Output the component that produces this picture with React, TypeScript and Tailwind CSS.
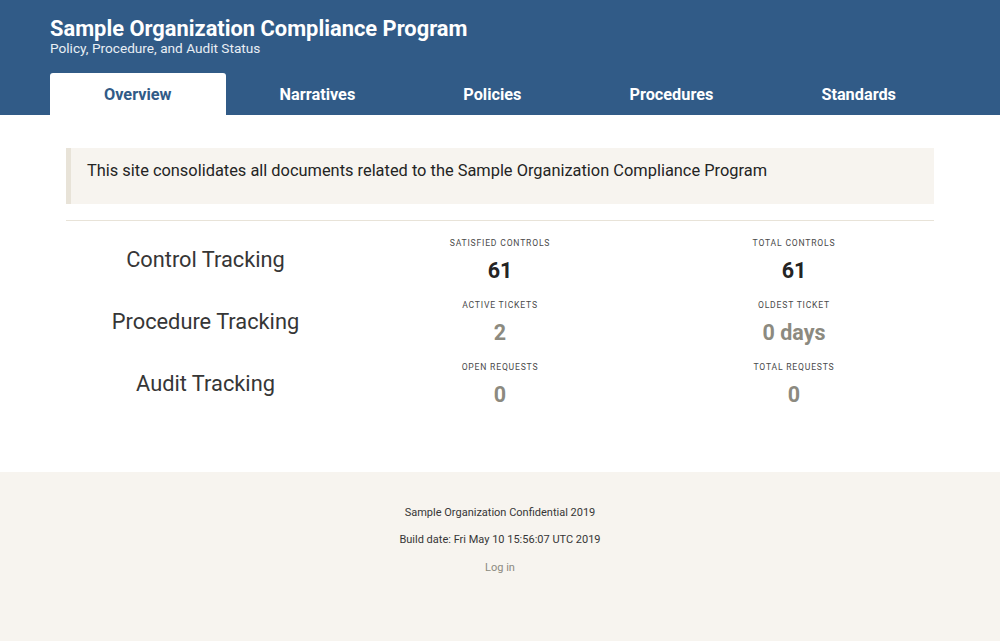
export default function App() {
  const tabs = ["Narratives", "Policies", "Procedures", "Standards"];
  const rows = [
    { t: "Control Tracking", a: "SATISFIED CONTROLS", av: "61", ac: "text-[#242424]", b: "TOTAL CONTROLS", bv: "61", bc: "text-[#242424]" },
    { t: "Procedure Tracking", a: "ACTIVE TICKETS", av: "2", ac: "text-[#8c8a80]", b: "OLDEST TICKET", bv: "0 days", bc: "text-[#8c8a80]" },
    { t: "Audit Tracking", a: "OPEN REQUESTS", av: "0", ac: "text-[#8c8a80]", b: "TOTAL REQUESTS", bv: "0", bc: "text-[#8c8a80]" },
  ];
  return (
    <div className="w-[1000px] h-[641px] flex flex-col bg-white overflow-hidden font-['Roboto',sans-serif] text-[#363636]">
      <header className="bg-[#315b87] h-[115px] flex flex-col justify-between pl-[50px] pt-[15px]">
        <div>
          <h1 className="text-[21.86px] leading-[28px] font-bold text-white">Sample Organization Compliance Program</h1>
          <p className="text-[13.65px] leading-[10px] text-[#e8eef4]">Policy, Procedure, and Audit Status</p>
        </div>
        <nav className="flex items-end h-[42px]">
          <div className="h-[42px] px-[54px] pt-[3px] bg-white rounded-t-[3px] flex items-center justify-center text-[16.3px] font-bold text-[#315b87]">Overview</div>
          {tabs.map((t) => (
            <div key={t} className="h-[42px] px-[54px] pt-[3px] flex items-center justify-center text-[16.3px] font-bold text-white">{t}</div>
          ))}
        </nav>
      </header>
      <main className="flex-1 px-[66px] pt-[33px]">
        <div className="h-[56px] bg-[#f7f4ef] border-l-[5px] border-[#e8e3d8] pl-[16px] pt-[13px] text-[16.4px] leading-[20px] text-[#242424]">
          This site consolidates all documents related to the Sample Organization Compliance Program
        </div>
        <hr className="mt-[16px] border-t border-[#e8e3d8]" />
        <div className="mt-[16px] -mr-[7px] flex flex-col">
          {rows.map((r) => (
            <div key={r.t} className="grid grid-cols-[287px_294px_294px] h-[62px]">
              <div className="pr-[8px] pt-[2px] h-[44px] flex items-center justify-center text-[21.8px] leading-[28px] text-[#363636]">{r.t}</div>
              <div className="flex flex-col items-center">
                <div className="text-[8.6px] leading-[13px] tracking-[0.8px] text-[#4a4a4a]">{r.a}</div>
                <div className={`text-[21.5px] leading-[34px] mt-[4px] font-bold ${r.ac}`}>{r.av}</div>
              </div>
              <div className="flex flex-col items-center">
                <div className="text-[8.6px] leading-[13px] tracking-[0.8px] text-[#4a4a4a]">{r.b}</div>
                <div className={`text-[21.5px] leading-[34px] mt-[4px] font-bold ${r.bc}`}>{r.bv}</div>
              </div>
            </div>
          ))}
        </div>
      </main>
      <footer className="h-[169px] bg-[#f7f4ef] flex flex-col items-center pt-[27px] text-[11px] text-[#363636]">
        <p className="leading-[27px]">Sample Organization Confidential 2019</p>
        <p className="leading-[27px]">Build date: Fri May 10 15:56:07 UTC 2019</p>
        <p className="leading-[27px] pt-[1px] text-[#8c8a80]">Log in</p>
      </footer>
    </div>
  );
}
